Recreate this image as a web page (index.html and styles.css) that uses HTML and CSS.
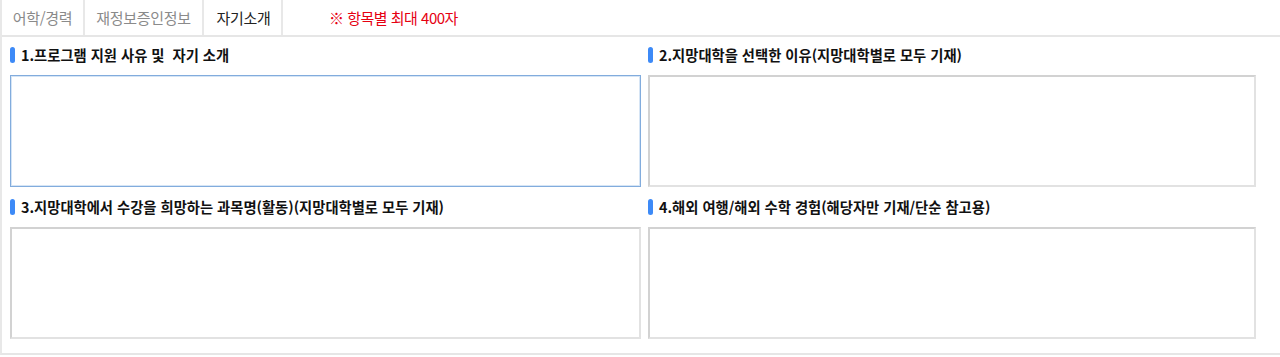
FILE: index.html
```html
<!DOCTYPE html>
<html lang="ko">
<head>
<meta charset="utf-8">
<title>자기소개</title>
<link rel="stylesheet" href="styles.css">
</head>
<body>
<div class="panel">
  <div class="tabbar">
    <div class="tab t1">어학/경력</div>
    <div class="tab t2">재정보증인정보</div>
    <div class="tab t3 active">자기소개</div>
    <div class="notice">※ 항목별 최대 400자</div>
  </div>
  <div class="grid">
    <div class="cell">
      <h3 class="qtitle">1.프로그램 지원 사유 및&nbsp; 자기 소개</h3>
      <textarea class="answer left focused"></textarea>
    </div>
    <div class="cell">
      <h3 class="qtitle">2.지망대학을 선택한 이유(지망대학별로 모두 기재)</h3>
      <textarea class="answer right"></textarea>
    </div>
    <div class="cell">
      <h3 class="qtitle">3.지망대학에서 수강을 희망하는 과목명(활동)(지망대학별로 모두 기재)</h3>
      <textarea class="answer left"></textarea>
    </div>
    <div class="cell">
      <h3 class="qtitle">4.해외 여행/해외 수학 경험(해당자만 기재/단순 참고용)</h3>
      <textarea class="answer right"></textarea>
    </div>
  </div>
</div>
</body>
</html>
```

FILE: styles.css
```css
* { box-sizing: border-box; }
html, body { margin: 0; padding: 0; background: #fff; }
body {
  font-family: "Noto Sans CJK KR", "Noto Sans", sans-serif;
  color: #222;
}
.panel {
  width: 1280px;
  border-left: 2px solid #e8e8e8;
  border-bottom: 2px solid #e6e6e6;
  padding-bottom: 14px;
}
.tabbar {
  display: flex;
  align-items: center;
  height: 37px;
  border-bottom: 2px solid #e6e6e6;
}
.tab {
  height: 35px;
  line-height: 35px;
  text-align: center;
  font-size: 15px;
  letter-spacing: -0.3px;
  color: #8a8a8a;
  border-right: 2px solid #e8e8e8;
}
.t1 { width: 83px; }
.t2 { width: 119px; }
.t3 { width: 79px; padding-left: 2px; }
.tab.active { color: #222; }
.notice {
  margin-left: 46px;
  font-size: 15px;
  letter-spacing: -0.5px;
  color: #e60012;
  line-height: 35px;
}
.grid {
  display: grid;
  grid-template-columns: 638px 638px;
  row-gap: 12px;
  padding-top: 10px;
}
.cell {
  display: flex;
  flex-direction: column;
  padding-left: 8px;
}
.qtitle {
  margin: 0 0 12px 0;
  height: 16px;
  line-height: 16px;
  font-size: 14.3px;
  font-weight: bold;
  letter-spacing: 0;
  color: #111;
  display: flex;
  align-items: center;
  gap: 6px;
}
.qtitle::before {
  content: "";
  width: 5px;
  height: 16px;
  border-radius: 3px;
  background: #3d8af7;
  flex: none;
}
.answer {
  display: block;
  height: 112px;
  margin: 0;
  resize: none;
  border: 2px solid;
  border-color: #d2d2d2 #e2e2e2 #e2e2e2 #d2d2d2;
  background: #fff;
  outline: none;
  font-family: inherit;
}
.answer.left { width: 631px; }
.answer.right { width: 608px; }
.answer.focused {
  border: 1px solid #82acdd;
  box-shadow: inset 0 0 0 1px #d6e5f5;
}
```
